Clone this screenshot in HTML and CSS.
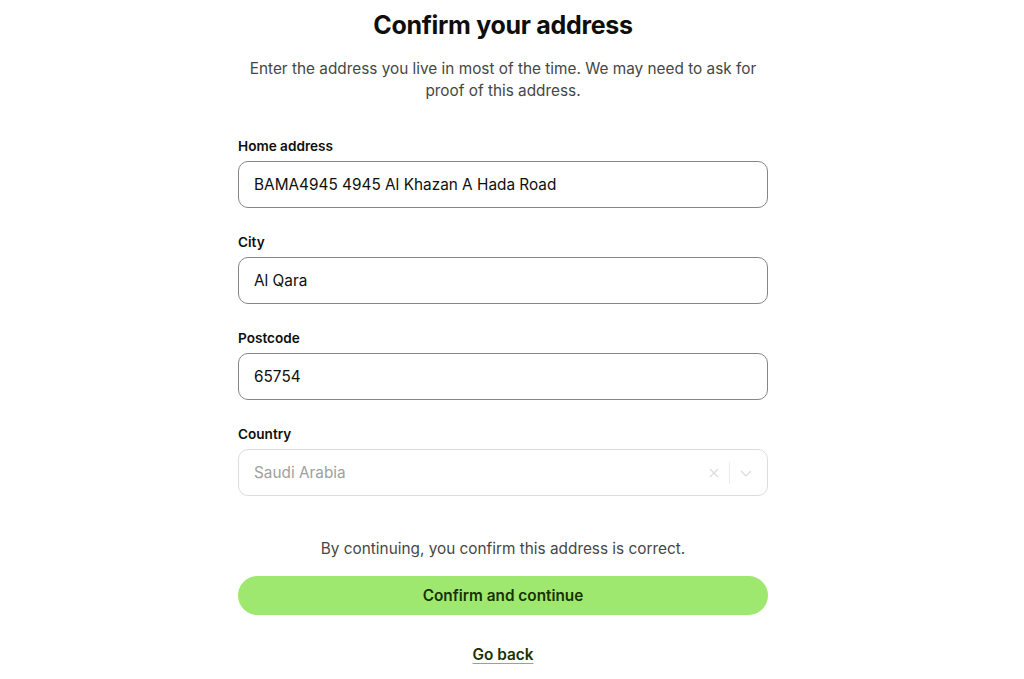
FILE: index.html
```html
<!DOCTYPE html>
<html lang="en">
<head>
<meta charset="utf-8">
<title>Confirm your address</title>
<link rel="stylesheet" href="styles.css">
</head>
<body>
<main class="page">
  <h1 class="title">Confirm your address</h1>
  <p class="intro">Enter the address you live in most of the time. We may need to ask for proof of this address.</p>
  <form class="form">
    <div class="field">
      <label class="label">Home address</label>
      <div class="input">BAMA4945 4945 Al Khazan A Hada Road</div>
    </div>
    <div class="field">
      <label class="label">City</label>
      <div class="input">Al Qara</div>
    </div>
    <div class="field">
      <label class="label">Postcode</label>
      <div class="input">65754</div>
    </div>
    <div class="field">
      <label class="label">Country</label>
      <div class="input select">
        <span class="select-value">Saudi Arabia</span>
        <span class="select-icons">
          <svg class="ico" width="12" height="12" viewBox="0 0 12 12"><path d="M2 2L10 10M10 2L2 10" stroke="#dcdcdc" stroke-width="1.2" fill="none"/></svg>
          <span class="sep"></span>
          <svg class="ico" width="14" height="12" viewBox="0 0 14 12"><path d="M2 4L7 9L12 4" stroke="#dcdcdc" stroke-width="1.2" fill="none"/></svg>
        </span>
      </div>
    </div>
    <p class="note">By continuing, you confirm this address is correct.</p>
    <button type="button" class="btn">Confirm and continue</button>
    <a class="back" href="#">Go back</a>
  </form>
</main>
</body>
</html>
```
FILE: styles.css
```css
* { box-sizing: border-box; }
html, body { margin: 0; padding: 0; background: #fff; }
body {
  font-family: "Inter", "Liberation Sans", sans-serif;
  color: #0e0f0c;
  padding-right: 18px;
}
.page {
  width: 530px;
  margin: 0 auto;
  display: flex;
  flex-direction: column;
  align-items: stretch;
}
.title {
  margin: 8px 0 0;
  font-size: 25px;
  line-height: 34px;
  font-weight: 700;
  text-align: center;
  letter-spacing: -0.3px;
}
.intro {
  margin: 16px 0 0;
  font-size: 15.35px;
  line-height: 22px;
  color: #454745;
  text-align: center;
  padding: 0 8px;
}
.form {
  display: flex;
  flex-direction: column;
  margin-top: 34px;
}
.field {
  display: flex;
  flex-direction: column;
  margin-bottom: 24px;
}
.label {
  font-size: 13.6px;
  line-height: 20px;
  font-weight: 600;
  color: #0e0f0c;
  margin-bottom: 5px;
}
.input {
  height: 47px;
  border: 1px solid #868685;
  border-radius: 10px;
  padding: 0 15px;
  display: flex;
  align-items: center;
  font-size: 15.35px;
  color: #0e0f0c;
}
.select {
  border-color: #dcdcdc;
  justify-content: space-between;
  padding-right: 14px;
}
.select-value { color: #a0a0a0; }
.select-icons {
  display: flex;
  align-items: center;
  gap: 9px;
}
.sep {
  width: 1px;
  height: 22px;
  background: #ececec;
}
.note {
  margin: 18px 0 0;
  text-align: center;
  font-size: 15.35px;
  line-height: 22px;
  color: #454745;
}
.btn {
  margin-top: 16px;
  height: 39px;
  border: none;
  border-radius: 20px;
  background: #9fe870;
  color: #163300;
  font-family: inherit;
  font-size: 15.35px;
  font-weight: 600;
}
.back {
  align-self: center;
  margin-top: 30px;
  font-size: 15.35px;
  font-weight: 600;
  color: #163300;
  text-decoration: underline;
  text-decoration-color: #9aa38f;
  text-underline-offset: 3px;
  text-decoration-thickness: 2px;
}
```
